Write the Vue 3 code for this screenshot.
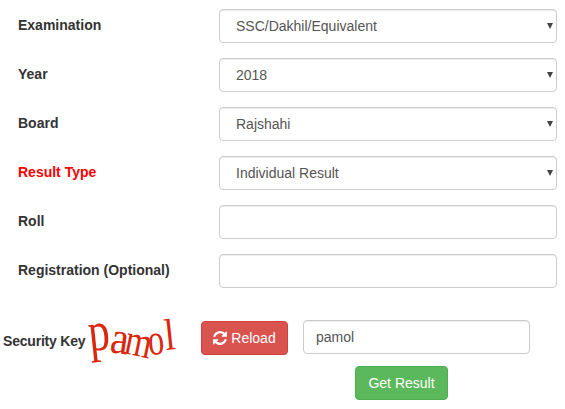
<script setup>
const selects = [
  { label: 'Examination', value: 'SSC/Dakhil/Equivalent' },
  { label: 'Year', value: '2018' },
  { label: 'Board', value: 'Rajshahi' },
  { label: 'Result Type', value: 'Individual Result', danger: true },
]
const inputs = ['Roll', 'Registration (Optional)']

// captcha letters, each one warped on its own
const captcha = [
  { ch: 'p', transform: 'translate(2 31) rotate(-6) scale(1.25 1.65)' },
  { ch: 'a', transform: 'translate(21 32) rotate(8) scale(1.2 1.35)' },
  { ch: 'm', transform: 'translate(35 33) rotate(12) scale(1 1.3)' },
  { ch: 'o', transform: 'translate(61 35) rotate(-5) scale(0.95 1.3)' },
  { ch: 'l', transform: 'translate(78 30) rotate(-6) scale(1.1 1.3)' },
]
</script>

<template>
  <form class="result-form" @submit.prevent>
    <div v-for="row in selects" :key="row.label" class="row">
      <label class="row__label" :class="{ 'row__label--danger': row.danger }">{{ row.label }}</label>
      <div class="select-wrap">
        <select class="control control--select">
          <option>{{ row.value }}</option>
        </select>
        <span class="select-wrap__caret"></span>
      </div>
    </div>

    <div v-for="label in inputs" :key="label" class="row">
      <label class="row__label">{{ label }}</label>
      <input class="control" type="text" />
    </div>

    <div class="security">
      <label class="security__label">Security Key</label>
      <svg class="captcha" width="88" height="44" viewBox="0 0 88 44">
        <text
          v-for="l in captcha"
          :key="l.ch"
          class="captcha__letter"
          :transform="l.transform"
        >{{ l.ch }}</text>
      </svg>
      <button class="btn btn--reload" type="button">
        <svg width="14" height="14" viewBox="0 0 1536 1536" fill="currentColor">
          <path d="M1511 928q0 5-1 7-64 268-268 434.5t-478 166.5q-146 0-282.5-55t-243.5-157l-129 129q-19 19-45 19t-45-19-19-45v-448q0-26 19-45t45-19h448q26 0 45 19t19 45-19 45l-137 137q71 66 161 102t187 36q134 0 250-65t186-179q11-17 53-117 8-23 30-23h192q13 0 22.5 9.5t9.5 22.5zm25-800v448q0 26-19 45t-45 19h-448q-26 0-45-19t-19-45 19-45l138-138q-148-137-349-137-134 0-250 65t-186 179q-11 17-53 117-8 23-30 23h-199q-13 0-22.5-9.5t-9.5-22.5v-7q65-268 270-434.5t480-166.5q146 0 284 55.5t245 156.5l130-129q19-19 45-19t45 19 19 45z"/>
        </svg>
        Reload
      </button>
      <input class="control control--key" type="text" value="pamol" />
    </div>

    <div class="actions">
      <button class="btn btn--submit" type="submit">Get Result</button>
    </div>
  </form>
</template>

<style scoped>
.result-form {
  width: 565px;
  height: 409px;
  padding-top: 9px;
  box-sizing: border-box;
  overflow: hidden;
  background: #fff;
  font-family: "Liberation Sans", Arial, sans-serif;
  font-size: 14px;
  color: #333;
}

/* Rows */
.row {
  display: flex;
  align-items: flex-start;
  margin-bottom: 15px;
}
.row__label {
  width: 201px;
  margin-left: 18px;
  padding-top: 6px;
  font-weight: 700;
  line-height: 20px;
}
.row__label--danger { color: #f00; }

/* Controls */
.control {
  display: block;
  width: 338px;
  height: 34px;
  padding: 6px 16px;
  box-sizing: border-box;
  border: 1px solid #ccc;
  border-radius: 4px;
  background: #fff;
  color: #555;
  font: 14px/20px "Liberation Sans", Arial, sans-serif;
  box-shadow: inset 0 1px 1px rgba(0,0,0,0.075);
  outline: none;
}
.control--select { appearance: none; }

.select-wrap { position: relative; }
.select-wrap__caret {
  position: absolute;
  top: 14px; right: 4px;
  width: 0; height: 0;
  border-left: 3.5px solid transparent;
  border-right: 3.5px solid transparent;
  border-top: 6px solid #444;
  pointer-events: none;
}

/* Security key */
.security {
  display: flex;
  align-items: flex-start;
  margin-top: 32px;
  padding-left: 3px;
}
.security__label {
  width: 85px;
  margin-top: 11px;
  font-weight: 700;
  line-height: 20px;
  letter-spacing: -0.2px;
  white-space: nowrap;
}
.captcha {
  flex: none;
  overflow: visible;
}
.captcha__letter {
  font-family: "Liberation Serif", serif;
  font-size: 34px;
  fill: #d9280f;
}

/* Buttons */
.btn {
  display: inline-flex;
  align-items: center;
  justify-content: center;
  height: 34px;
  box-sizing: border-box;
  border: 1px solid transparent;
  border-radius: 4px;
  color: #fff;
  font: 14px/20px "Liberation Sans", Arial, sans-serif;
  cursor: pointer;
}
.btn--reload {
  flex: none;
  gap: 4px;
  width: 87px;
  margin: 1px 0 0 25px;
  padding: 0;
  background: #d9534f;
  border-color: #d43f3a;
}
.btn--submit {
  width: 93px;
  padding: 0;
  background: #5cb85c;
  border-color: #4cae4c;
}
.control--key {
  flex: none;
  width: 227px;
  margin-left: 15px;
  padding: 6px 12px;
}
.actions {
  margin-top: 2px;
  padding-left: 355px;
}
</style>
